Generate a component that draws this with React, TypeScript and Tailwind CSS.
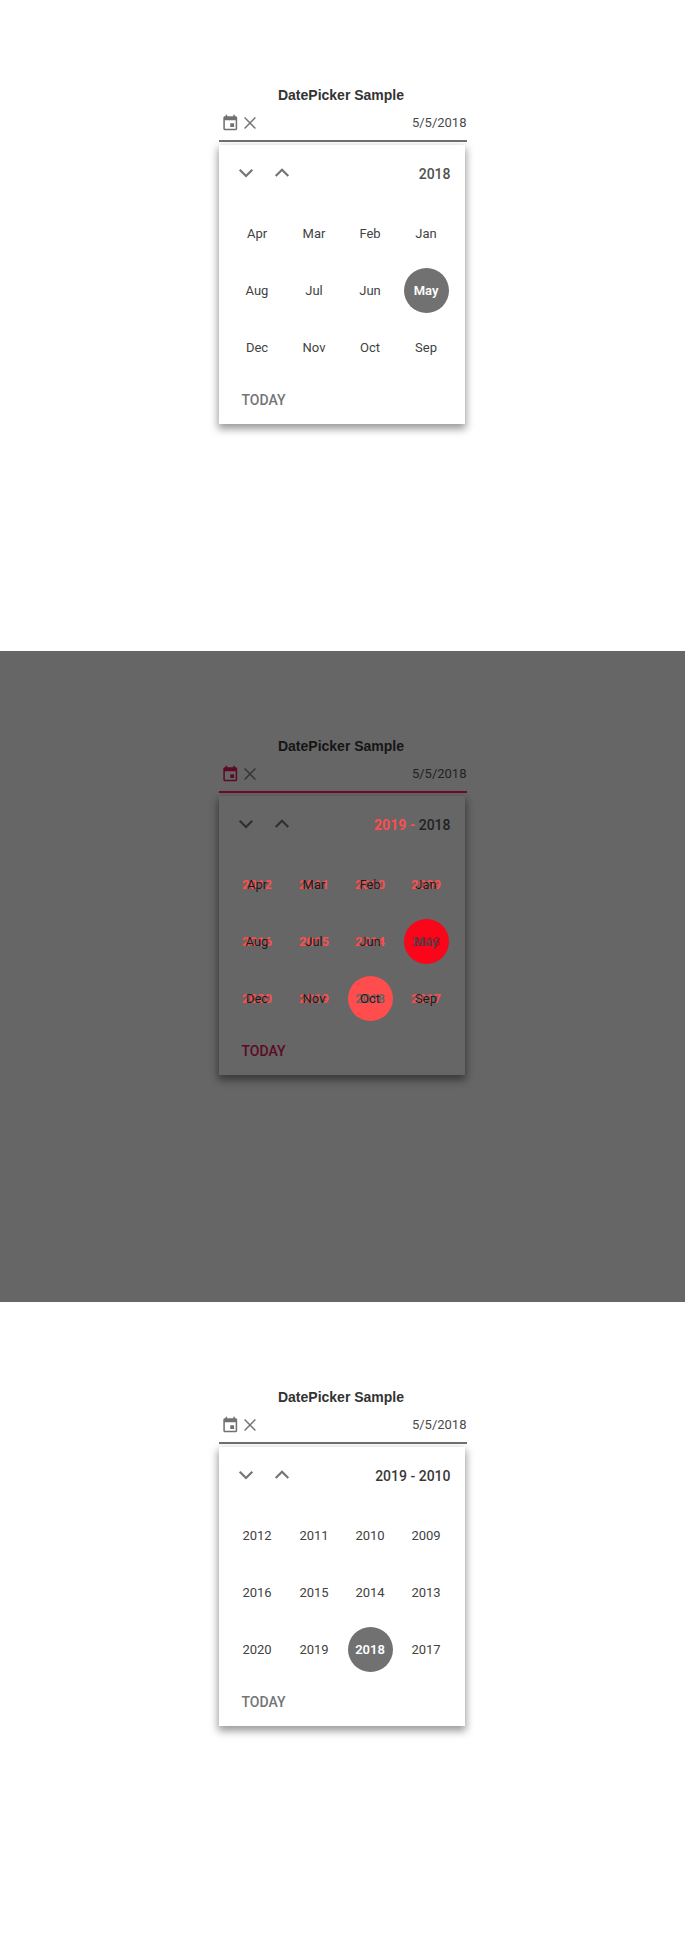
import React from "react";

type Mode = "month" | "year" | "diff";

const MONTHS = ["Apr", "Mar", "Feb", "Jan", "Aug", "Jul", "Jun", "May", "Dec", "Nov", "Oct", "Sep"];
const YEARS = ["2012", "2011", "2010", "2009", "2016", "2015", "2014", "2013", "2020", "2019", "2018", "2017"];

function CalendarIcon({ className }: { className: string }) {
  return (
    <svg viewBox="0 0 24 24" className={className} fill="currentColor">
      <path d="M17 12h-5v5h5v-5zM16 1v2H8V1H6v2H5c-1.11 0-1.99.9-1.99 2L3 19c0 1.1.89 2 2 2h14c1.1 0 2-.9 2-2V5c0-1.1-.9-2-2-2h-1V1h-2zm3 18H5V8h14v11z" />
    </svg>
  );
}

function Cell({ index, mode }: { index: number; mode: Mode }) {
  const diff = mode === "diff";
  const monthOn = MONTHS[index] === "May";
  const yearOn = YEARS[index] === "2018";
  if (!diff) {
    const on = mode === "month" ? monthOn : yearOn;
    return (
      <div className={`flex size-[45px] items-center justify-center rounded-full pr-[1px] ${on ? "bg-[#717171] font-semibold text-white" : "text-[#424242]"}`}>
        {mode === "month" ? MONTHS[index] : YEARS[index]}
      </div>
    );
  }
  const circle = monthOn ? "bg-[#fa0519]" : yearOn ? "bg-[#ff4d4d]" : "";
  const under = monthOn ? "text-[#b5081b]" : yearOn ? "text-[#666] font-semibold" : "text-[#ff4d4d] font-bold";
  const over = monthOn ? "text-[#5d3a45] font-bold" : "text-[#1c1c1c]";
  return (
    <div className={`grid size-[45px] place-items-center rounded-full pr-[1px] ${circle}`}>
      <span className={`col-start-1 row-start-1 ${under}`}>{YEARS[index]}</span>
      <span className={`col-start-1 row-start-1 ${over}`}>{MONTHS[index]}</span>
    </div>
  );
}

function Panel({ mode }: { mode: Mode }) {
  const diff = mode === "diff";
  return (
    <section className={`h-[651px] pl-[219px] pt-[84px] ${diff ? "bg-[#666]" : "bg-white"}`}>
      <h2 className={`ml-[-2px] flex h-[22px] w-[248px] items-center justify-center font-['Liberation_Sans',sans-serif] text-[14px] font-bold ${diff ? "text-[#151515]" : "text-[#333]"}`}>
        DatePicker Sample
      </h2>
      <div className={`flex h-[36px] w-[248px] items-center border-b-2 pb-[1px] ${diff ? "border-[#6e0a2c]" : "border-[#717171]"}`}>
        <CalendarIcon className={`ml-[2px] mt-[2px] size-[18.5px] ${diff ? "text-[#5c0a25]" : "text-[#717171]"}`} />
        <svg viewBox="0 0 12 12" className={`ml-[4.5px] size-[12px] ${diff ? "text-[#333]" : "text-[#717171]"}`} fill="none" stroke="currentColor" strokeWidth="1.4">
          <path d="M.6.6l10.8 10.8M11.4.6L.6 11.4" />
        </svg>
        <span className={`ml-auto mr-[0.5px] text-[13px] ${diff ? "text-[#222]" : "text-[#4a4a4a]"}`}>5/5/2018</span>
      </div>
      <div className={`mt-[3px] flex h-[279px] w-[246px] flex-col ${diff ? "bg-[#666] shadow-[0_4px_8px_1px_rgba(0,0,0,0.45)]" : "bg-white shadow-[0_4px_8px_1px_rgba(0,0,0,0.4)]"}`}>
        <div className={`flex h-[58px] items-center pl-[19px] pr-[14.5px] ${diff ? "text-[#303030]" : "text-[#757575]"}`}>
          <svg viewBox="0 0 16 10" className="mb-[3px] h-[10px] w-[16px]" fill="none" stroke="currentColor" strokeWidth="2.2">
            <path d="M1.7 1.7L8 8l6.3-6.3" />
          </svg>
          <svg viewBox="0 0 16 10" className="mb-[3px] ml-[20px] h-[10px] w-[16px]" fill="none" stroke="currentColor" strokeWidth="2.2">
            <path d="M1.7 8L8 1.7 14.3 8" />
          </svg>
          <div className={`ml-auto whitespace-pre text-[14px] font-medium ${diff ? "text-[#222]" : mode === "month" ? "text-[#505050]" : "text-[#383838]"}`}>
            {diff && <span className="font-bold text-[#ff4d4d]">2019 - </span>}
            {mode === "year" ? "2019 - 2010" : "2018"}
          </div>
        </div>
        <div className="mt-[8px] grid grid-cols-[57px_56px_56px_45px] gap-y-[12px] pl-[16px] text-[13px]">
          {MONTHS.map((m, i) => (
            <Cell key={m} index={i} mode={mode} />
          ))}
        </div>
        <div className={`ml-[22.5px] mt-[19px] text-[14px] font-medium leading-[22px] ${diff ? "text-[#5c0a25]" : "text-[#757575]"}`}>TODAY</div>
      </div>
    </section>
  );
}

export default function App() {
  return (
    <main className="w-full font-[Roboto,sans-serif]">
      <Panel mode="month" />
      <Panel mode="diff" />
      <Panel mode="year" />
    </main>
  );
}
